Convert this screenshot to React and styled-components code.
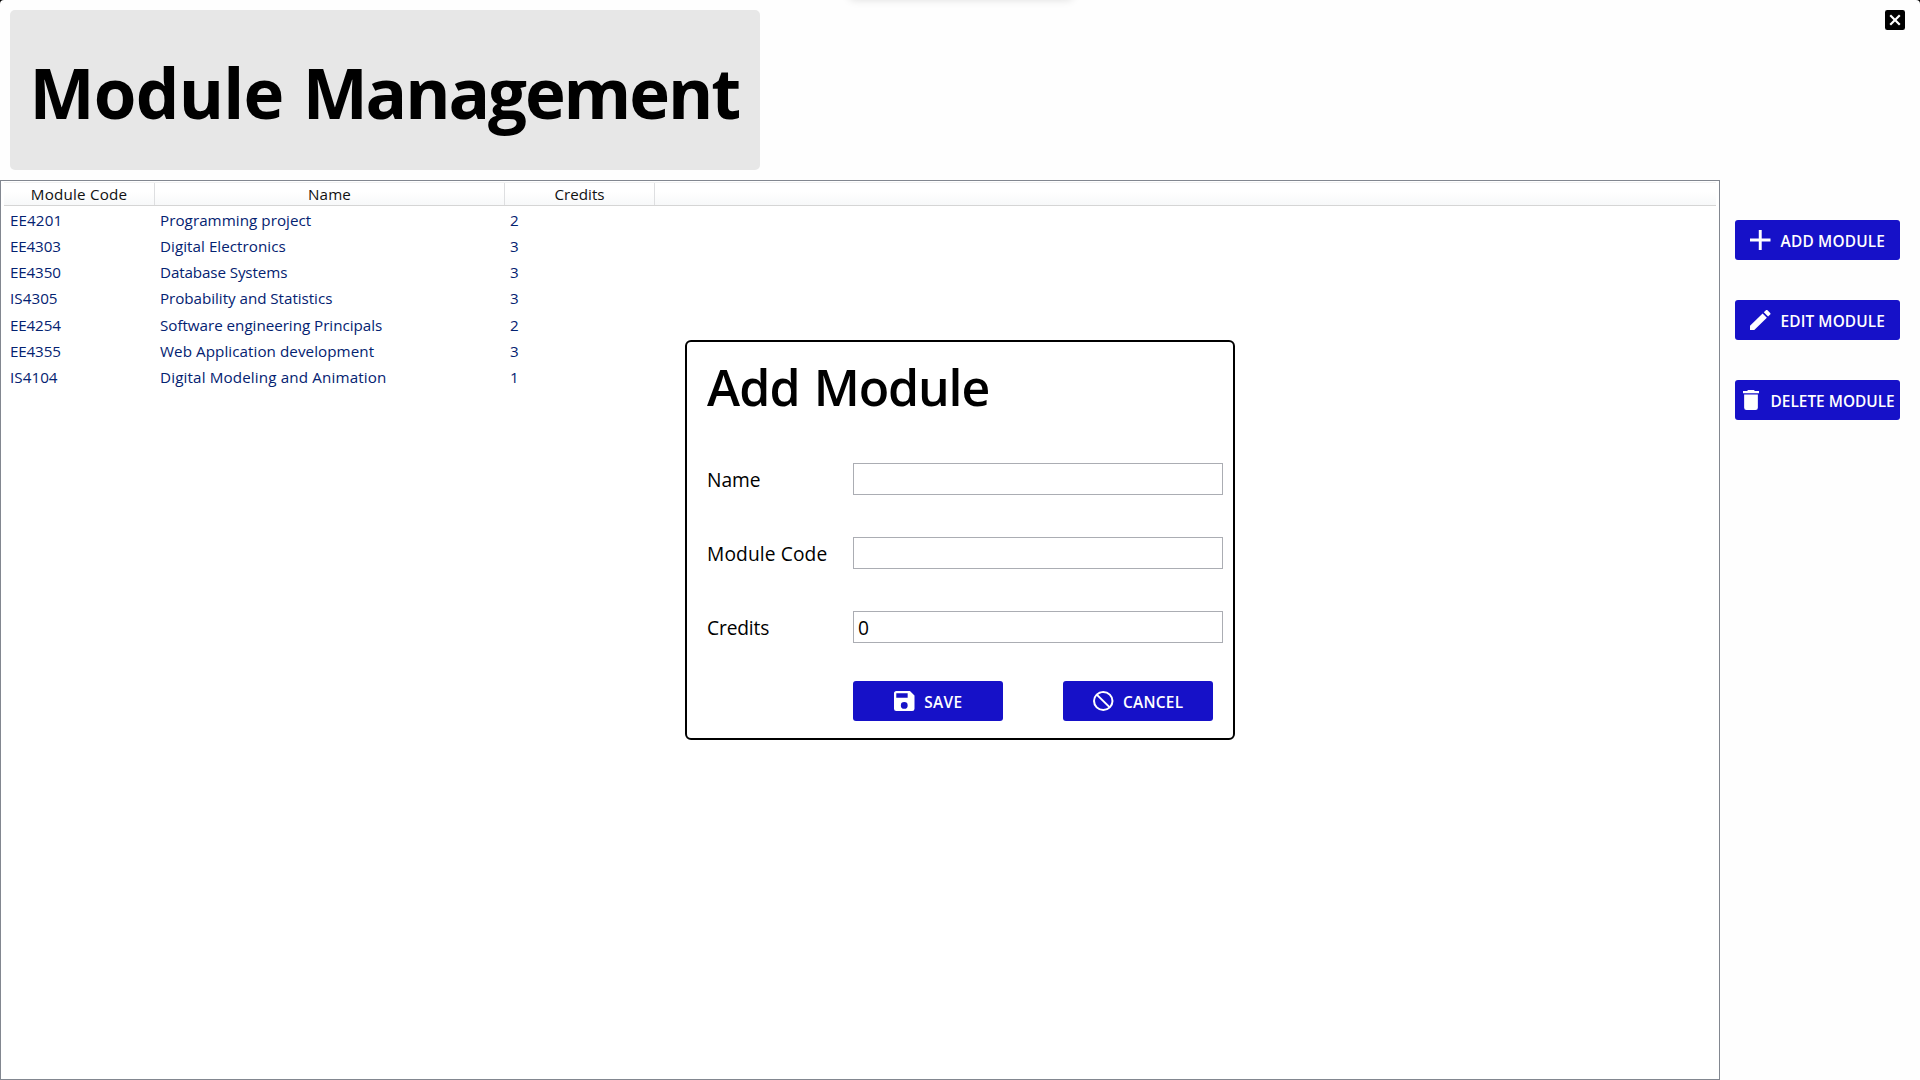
import React from 'react';
import styled, { createGlobalStyle } from 'styled-components';

const GlobalStyle = createGlobalStyle`
  * { box-sizing: border-box; }
  html { background: #000; }
  body {
    margin: 0;
    overflow: hidden;
    background: #000;
    font-family: "Open Sans", "Noto Sans", sans-serif;
  }
`;

const Window = styled.div`
  position: relative;
  display: flex;
  flex-direction: column;
  width: 1920px;
  height: 1080px;
  overflow: hidden;
  background: #fefefe;
  border-radius: 4px 4px 0 0;
`;

const TopShade = styled.div`
  position: absolute;
  top: -10px;
  left: 850px;
  width: 222px;
  height: 9px;
  border-radius: 5px;
  box-shadow: 0 0 9px 1px rgba(0, 0, 0, 0.13);
`;

const Header = styled.header`
  display: flex;
  justify-content: space-between;
  align-items: flex-start;
  height: 180px;
  padding: 10px 15px 10px 10px;
`;

const TitlePanel = styled.div`
  display: flex;
  align-items: center;
  width: 750px;
  height: 160px;
  padding: 4px 0 0 19.6px;
  border-radius: 5px;
  background: #e7e7e7;
`;

const Title = styled.h1`
  margin: 0;
  font-size: 69px;
  font-weight: 700;
  line-height: 94px;
  word-spacing: 1.3px;
  white-space: nowrap;
  color: #000;
`;

const Word = styled.span`
  letter-spacing: ${(p) => p.$tracking}px;
`;

const CloseButton = styled.button`
  display: block;
  width: 20px;
  height: 20px;
  padding: 0;
  border: 0;
  background: transparent;
  color: #000;
  svg { display: block; }
`;

const Body = styled.main`
  display: flex;
  height: 900px;
`;

const List = styled.section`
  width: 1720px;
  height: 900px;
  padding: 1px 3px;
  border: 1px solid #828790;
  background: #fff;
`;

const ListHeader = styled.div`
  display: grid;
  grid-template-columns: 151px 350px 150px 1fr;
  height: 24px;
  margin-bottom: 1px;
  border-top: 1px solid #f2f2f2;
  border-bottom: 1px solid #d5d5d5;
  background: linear-gradient(#fff 0%, #fff 40%, #f7f8f9 100%);
`;

const HeaderCell = styled.div`
  display: flex;
  align-items: center;
  justify-content: center;
  border-right: 1px solid #dedfe1;
  font-size: 15.2px;
  line-height: 22px;
  letter-spacing: ${(p) => p.$tracking || 0}px;
  color: #111;
`;

const Row = styled.div`
  display: grid;
  grid-template-columns: 150px 350px 1fr;
  height: 26.17px;
  padding-left: 6px;
`;

const Cell = styled.div`
  font-size: 15.2px;
  line-height: 27px;
  letter-spacing: ${(p) => p.$tracking || 0}px;
  white-space: nowrap;
  color: #042271;
`;

const Actions = styled.aside`
  display: flex;
  flex-direction: column;
  gap: 40px;
  padding: 40px 0 0 15px;
`;

const ActionButton = styled.button`
  display: flex;
  align-items: center;
  gap: ${(p) => p.$gap}px;
  width: ${(p) => p.$width}px;
  height: 40px;
  padding: 0 0 0 ${(p) => p.$inset}px;
  border: 0;
  border-radius: 3px;
  background: #1611c8;
  color: #fff;
  font-family: inherit;
  svg { display: block; flex: none; }
`;

const ButtonLabel = styled.span`
  padding-top: 3px;
  font-size: 15.4px;
  font-weight: 600;
  line-height: 22px;
  letter-spacing: ${(p) => p.$tracking || 0}px;
  white-space: nowrap;
`;

const Dialog = styled.section`
  position: absolute;
  left: 685px;
  top: 340px;
  width: 550px;
  height: 400px;
  padding: 0 10px 0 20px;
  border: 2px solid #000;
  border-radius: 6px;
  background: #fff;
`;

const DialogTitle = styled.h2`
  margin: 0 0 31px;
  font-size: 50px;
  font-weight: 600;
  line-height: 90px;
  word-spacing: 0.8px;
  color: #000;
`;

const Field = styled.label`
  display: grid;
  grid-template-columns: 146px 370px;
  height: 32px;
  margin-bottom: 42px;
`;

const FieldName = styled.span`
  font-size: 19.2px;
  line-height: 33px;
  letter-spacing: ${(p) => p.$tracking || 0}px;
  color: #000;
`;

const Input = styled.input`
  width: 370px;
  height: 32px;
  padding: 1px 4px 0;
  border: 1px solid #abadb3;
  border-radius: 0;
  outline: 0;
  background: #fff;
  font-family: inherit;
  font-size: 19.2px;
  color: #000;
`;

const DialogButtons = styled.div`
  display: flex;
  gap: 60px;
  margin: -4px 0 0 146px;
`;

const ICONS = {
  plus: { box: '5 5 14 14', w: 20.5, d: 'M19,13H13V19H11V13H5V11H11V5H13V11H19V13Z' },
  pencil: { box: '3 3 18 18', w: 20.5, d: 'M20.71,7.04C21.1,6.65 21.1,6 20.71,5.63L18.37,3.29C18,2.9 17.35,2.9 16.96,3.29L15.12,5.12L18.87,8.87M3,17.25V21H6.75L17.81,9.93L14.06,6.18L3,17.25Z' },
  trash: { box: '5 3 14 18', w: 16, d: 'M19,4H15.5L14.5,3H9.5L8.5,4H5V6H19V4M6,19A2,2 0 0,0 8,21H16A2,2 0 0,0 18,19V7H6V19Z' },
  save: { box: '3 3 18 18', w: 20.5, d: 'M15,9H5V5H15M12,19A3,3 0 0,1 9,16A3,3 0 0,1 12,13A3,3 0 0,1 15,16A3,3 0 0,1 12,19M17,3H5C3.89,3 3,3.9 3,5V19A2,2 0 0,0 5,21H19A2,2 0 0,0 21,19V7L17,3Z' },
  cancel: { box: '2 2 20 20', w: 20.5, d: 'M12,2A10,10 0 0,1 22,12A10,10 0 0,1 12,22A10,10 0 0,1 2,12A10,10 0 0,1 12,2M12,4C10.1,4 8.4,4.6 7.1,5.7L18.3,16.9C19.3,15.5 20,13.8 20,12A8,8 0 0,0 12,4M16.9,18.3L5.7,7.1C4.6,8.4 4,10.1 4,12A8,8 0 0,0 12,20C13.9,20 15.6,19.4 16.9,18.3Z' },
  close: { box: '3 3 18 18', w: 20, d: 'M19,3H5A2,2 0 0,0 3,5V19A2,2 0 0,0 5,21H19A2,2 0 0,0 21,19V5A2,2 0 0,0 19,3M17,15.6L15.6,17L12,13.4L8.4,17L7,15.6L10.6,12L7,8.4L8.4,7L12,10.6L15.6,7L17,8.4L13.4,12L17,15.6Z' },
};

function Icon({ name }) {
  const { box, w, d } = ICONS[name];
  return (
    <svg width={w} height={20} viewBox={box} preserveAspectRatio="none" fill="currentColor">
      <path d={d} />
    </svg>
  );
}

function Action({ icon, label, width = 165, inset, gap, tracking }) {
  return (
    <ActionButton $width={width} $inset={inset} $gap={gap}>
      <Icon name={icon} />
      <ButtonLabel $tracking={tracking}>{label}</ButtonLabel>
    </ActionButton>
  );
}

const MODULES = [
  { code: 'EE4201', name: 'Programming project', credits: 2, codeTracking: 0.1, nameTracking: 0.04 },
  { code: 'EE4303', name: 'Digital Electronics', credits: 3, codeTracking: -0.15, nameTracking: 0.04 },
  { code: 'EE4350', name: 'Database Systems', credits: 3, codeTracking: -0.15, nameTracking: -0.12 },
  { code: 'IS4305', name: 'Probability and Statistics', credits: 3, codeTracking: 0.05, nameTracking: -0.04 },
  { code: 'EE4254', name: 'Software engineering Principals', credits: 2, codeTracking: -0.15, nameTracking: -0.03 },
  { code: 'EE4355', name: 'Web Application development', credits: 3, codeTracking: -0.15, nameTracking: 0.06 },
  { code: 'IS4104', name: 'Digital Modeling and Animation', credits: 1, codeTracking: 0.05, nameTracking: 0.14 },
];

export default function App() {
  return (
    <>
      <GlobalStyle />
      <Window>
        <TopShade />
        <Header>
          <TitlePanel>
            <Title>
              <Word $tracking={-0.8}>Module</Word> <Word $tracking={-2.1}>Management</Word>
            </Title>
          </TitlePanel>
          <CloseButton aria-label="Close">
            <Icon name="close" />
          </CloseButton>
        </Header>
        <Body>
          <List>
            <ListHeader>
              <HeaderCell $tracking={0.2}>Module Code</HeaderCell>
              <HeaderCell $tracking={0.15}>Name</HeaderCell>
              <HeaderCell>Credits</HeaderCell>
            </ListHeader>
            {MODULES.map((m) => (
              <Row key={m.code}>
                <Cell $tracking={m.codeTracking}>{m.code}</Cell>
                <Cell $tracking={m.nameTracking}>{m.name}</Cell>
                <Cell>{m.credits}</Cell>
              </Row>
            ))}
          </List>
          <Actions>
            <Action icon="plus" label="ADD MODULE" inset={15.3} gap={9.8} tracking={0.18} />
            <Action icon="pencil" label="EDIT MODULE" inset={15.3} gap={9.8} tracking={0.1} />
            <Action icon="trash" label="DELETE MODULE" inset={8.3} gap={11.3} tracking={0} />
          </Actions>
        </Body>
        <Dialog>
          <DialogTitle>
            <Word $tracking={-0.8}>Add</Word> <Word $tracking={-1.15}>Module</Word>
          </DialogTitle>
          <Field>
            <FieldName $tracking={0}>Name</FieldName>
            <Input defaultValue="" />
          </Field>
          <Field>
            <FieldName $tracking={0.12}>Module Code</FieldName>
            <Input defaultValue="" />
          </Field>
          <Field>
            <FieldName $tracking={-0.15}>Credits</FieldName>
            <Input defaultValue="0" />
          </Field>
          <DialogButtons>
            <Action icon="save" label="SAVE" width={150} inset={41} gap={9.8} tracking={0.3} />
            <Action icon="cancel" label="CANCEL" width={150} inset={30.3} gap={9.3} tracking={0.25} />
          </DialogButtons>
        </Dialog>
      </Window>
    </>
  );
}
